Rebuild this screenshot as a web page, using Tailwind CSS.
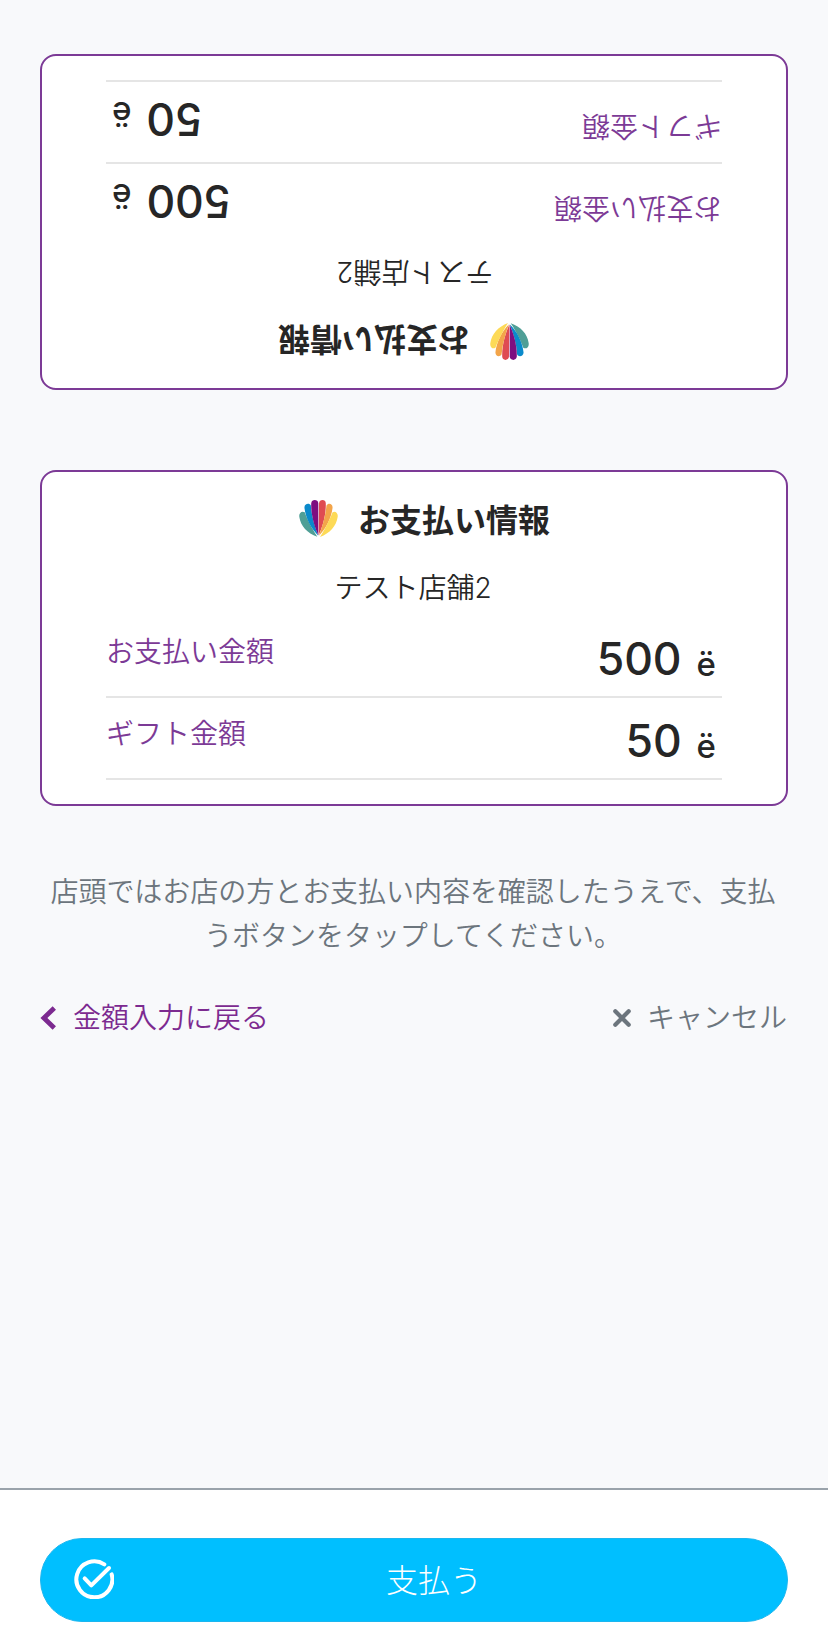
<!DOCTYPE html>
<html lang="ja">
<head>
<meta charset="utf-8">
<title>お支払い情報</title>
<script src="https://cdn.jsdelivr.net/npm/@tailwindcss/browser@4"></script>
</head>
<body class="min-h-[1640px] flex flex-col bg-[#f8f9fb] font-['Inter','Noto_Sans_CJK_JP',sans-serif] font-[350] text-[28px] text-[#262626]">
<svg class="hidden">
  <symbol id="shell" viewBox="0 0 115 109">
    <path fill="#4f9f96" d="M1 50C-1 38 8 31 17 36C24 56 38 84 54 108C24 98 5 77 1 50Z"/>
    <path fill="#0a8acb" d="M16 22C16 10 31 8 35 16C37 47 46 78 57 105C35 84 19 52 16 22Z"/>
    <path fill="#7d0e80" d="M36 10C37 -3 56 -3 57 10L57 104C45 78 35 43 36 10Z"/>
    <path fill="#df4b52" d="M59 10C60 -3 79 -3 79 10C80 43 70 78 58 104Z"/>
    <path fill="#f3a54a" d="M81 16C86 8 99 10 99 22C96 52 80 84 59 105C69 78 78 47 81 16Z"/>
    <path fill="#fdda57" d="M99 36C107 31 116 38 114 50C110 77 91 98 62 109C78 84 91 56 99 36Z"/>
  </symbol>
</svg>

<main class="flex-1 px-10 pt-[54px]">
  <section class="h-[336px] rotate-180 rounded-2xl border-2 border-[#7c3a96] bg-white px-16 pt-6">
    <div class="flex h-12 items-center justify-center gap-5 pl-[21px]">
      <svg class="mb-[3px] h-[37px] w-[39px]"><use href="#shell"/></svg>
      <h1 class="pt-0.5 text-[32px] leading-[48px] font-bold">お支払い情報</h1>
    </div>
    <p class="mt-[23px] pr-0.5 text-center leading-[42px]">テスト店舗2</p>
    <dl class="mt-[7px]">
      <div class="flex h-[82px] justify-between border-b-2 border-[#e5e5e5] pt-[15px] pr-[6px]">
        <dt class="leading-[42px] text-[#7c3a96]">お支払い金額</dt>
        <dd class="flex items-baseline gap-[15px] text-[44.5px] leading-[56px] font-[550]">500<span class="relative top-px text-[33px]">ë</span></dd>
      </div>
      <div class="flex h-[82px] justify-between border-b-2 border-[#e5e5e5] pt-[15px] pr-[6px]">
        <dt class="leading-[42px] text-[#7c3a96]">ギフト金額</dt>
        <dd class="flex items-baseline gap-[15px] text-[44.5px] leading-[56px] font-[550]">50<span class="relative top-px text-[33px]">ë</span></dd>
      </div>
    </dl>
  </section>

  <section class="mt-20 h-[336px] rounded-2xl border-2 border-[#7c3a96] bg-white px-16 pt-6">
    <div class="flex h-12 items-center justify-center gap-5 pl-[21px]">
      <svg class="mb-[3px] h-[37px] w-[39px]"><use href="#shell"/></svg>
      <h2 class="pt-0.5 text-[32px] leading-[48px] font-bold">お支払い情報</h2>
    </div>
    <p class="mt-[23px] pr-0.5 text-center leading-[42px]">テスト店舗2</p>
    <dl class="mt-[7px]">
      <div class="flex h-[82px] justify-between border-b-2 border-[#e5e5e5] pt-[15px] pr-[6px]">
        <dt class="leading-[42px] text-[#7c3a96]">お支払い金額</dt>
        <dd class="flex items-baseline gap-[15px] text-[44.5px] leading-[56px] font-[550]">500<span class="relative top-px text-[33px]">ë</span></dd>
      </div>
      <div class="flex h-[82px] justify-between border-b-2 border-[#e5e5e5] pt-[15px] pr-[6px]">
        <dt class="leading-[42px] text-[#7c3a96]">ギフト金額</dt>
        <dd class="flex items-baseline gap-[15px] text-[44.5px] leading-[56px] font-[550]">50<span class="relative top-px text-[33px]">ë</span></dd>
      </div>
    </dl>
  </section>

  <p class="mt-16 pr-0.5 text-center leading-[44px] tracking-[-0.04px] text-[#6c757d]">店頭ではお店の方とお支払い内容を確認したうえで、支払うボタンをタップしてください。</p>

  <nav class="mt-[39px] flex justify-between pr-px leading-[42px]">
    <a class="flex items-center text-[#7c2a90]">
      <svg class="mr-4 mb-px h-6 w-[17px]" viewBox="0 0 17 24" fill="none" stroke="currentColor" stroke-width="4.8"><path d="M14.3 2L3.9 12L14.3 22"/></svg>金額入力に戻る
    </a>
    <a class="flex items-center text-[#6c757d]">
      <svg class="mr-4 mb-px h-[18px] w-[18px]" viewBox="0 0 18 18" fill="none" stroke="currentColor" stroke-width="4.2" stroke-linecap="round"><path d="M2.3 2.3L15.7 15.7M15.7 2.3L2.3 15.7"/></svg>キャンセル
    </a>
  </nav>
</main>

<footer class="h-[152px] border-t-2 border-[#9aa3ab] bg-white px-10 pt-12">
  <button class="flex h-[84px] w-full items-center rounded-full border border-[#1cb6ef] bg-[#00bfff] px-[33px] text-[32px] font-light text-white">
    <svg class="mb-0.5 h-10 w-10" viewBox="0 0 120 120" fill="none" stroke="currentColor" stroke-width="12" stroke-linecap="round" stroke-linejoin="round"><path d="M91 16A54 54 0 1 0 113 46"/><path d="M32 58L52 79L105 27"/></svg>
    <span class="flex-1 pt-0.5 text-center">支払う</span>
  </button>
</footer>
</body>
</html>
